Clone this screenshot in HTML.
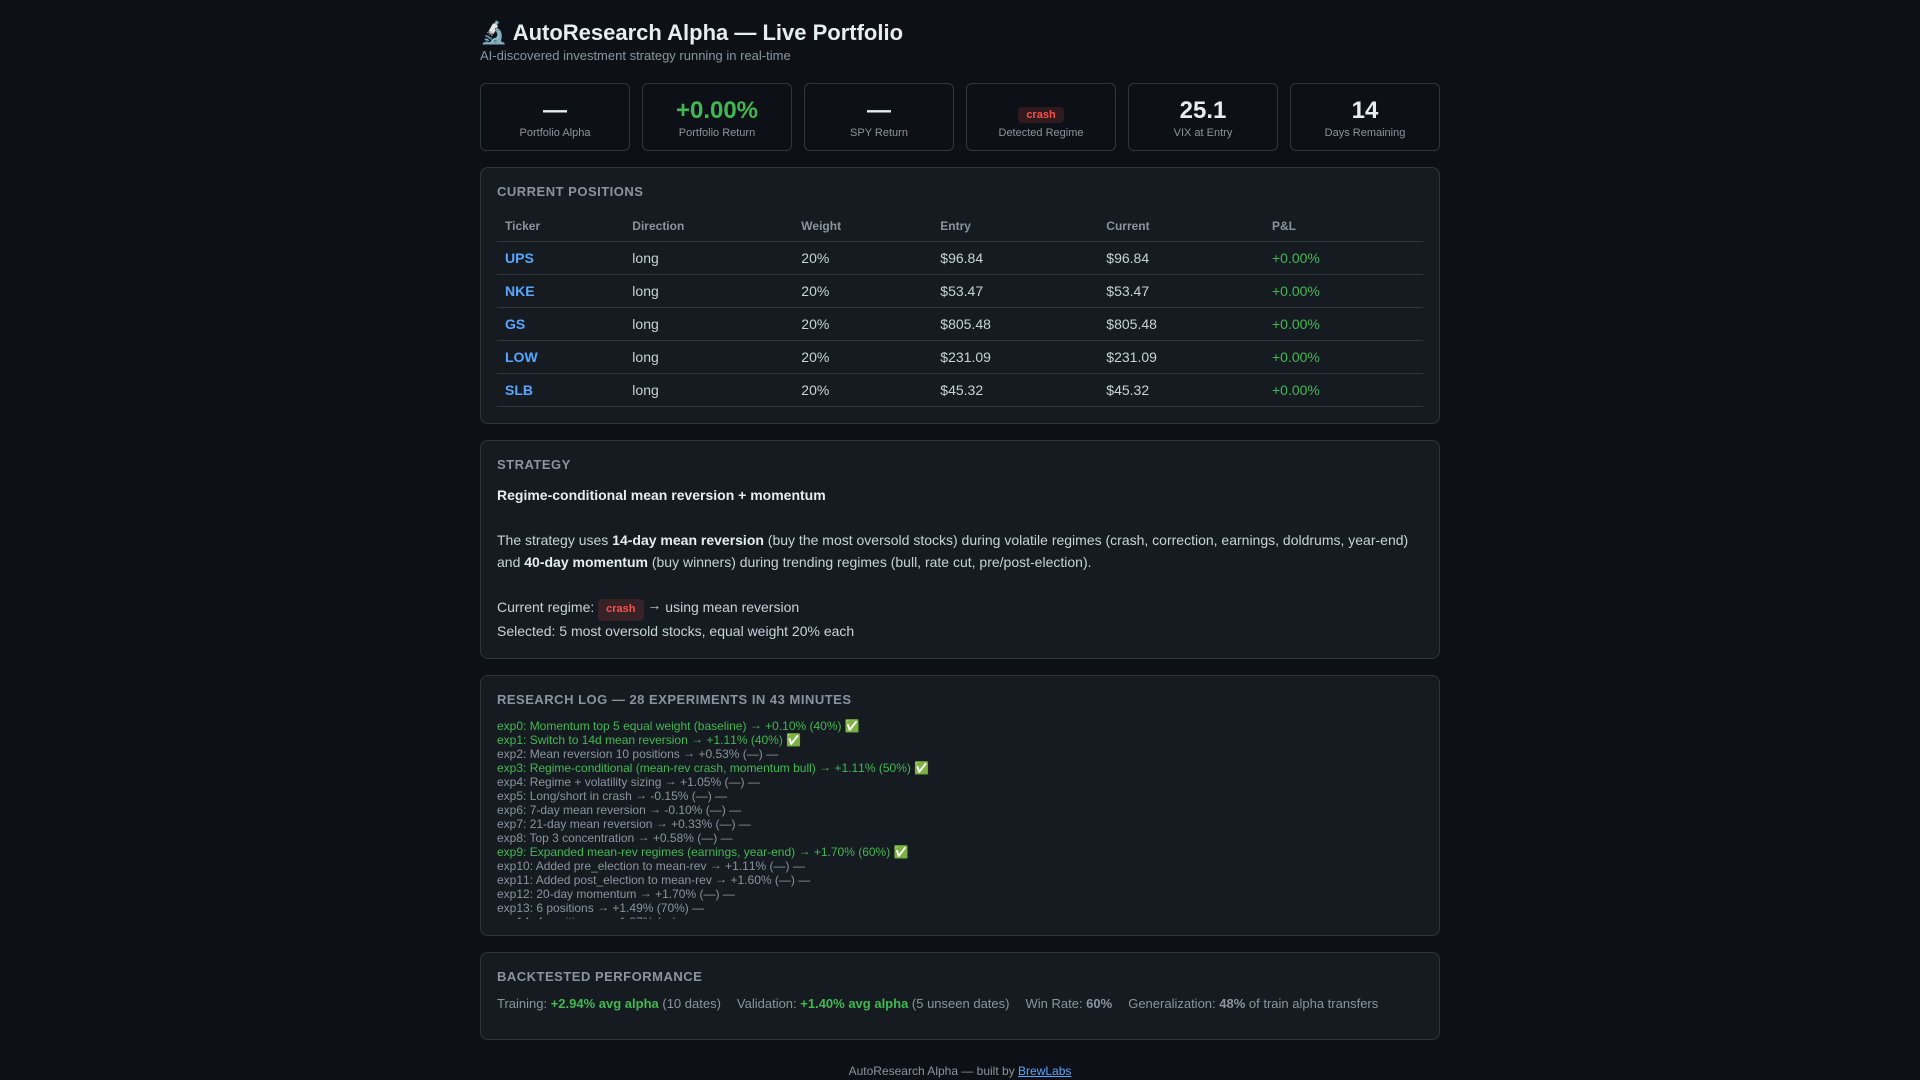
<!DOCTYPE html>
<html lang="en">
<head>
<meta charset="utf-8">
<title>AutoResearch Alpha — Live Portfolio</title>
<style>
*{box-sizing:border-box;margin:0;padding:0}
html,body{width:1920px;height:1080px;overflow:hidden}
body{background:#0d1117;color:#c9d1d9;font-family:Helvetica,Arial,"Liberation Sans",sans-serif;font-size:14px;position:relative}
.wrap{position:absolute;left:480px;top:0;width:960px}
h1{position:absolute;left:0;top:18px;font-size:22px;line-height:29px;font-weight:700;white-space:nowrap;color:#e6edf3}
.sub{position:absolute;left:0;top:47px;font-size:13px;line-height:17px;color:#8b949e}
.metrics{position:absolute;left:0;top:83px;width:960px;display:grid;grid-template-columns:repeat(6,150px);gap:12px}
.m{height:68px;border:1px solid #30363d;border-radius:6px;text-align:center;padding-top:12px}
.v{font-size:24px;line-height:29px;font-weight:700;height:29px;color:#e6edf3}
.v.g{color:#3fb950}
.l{font-size:11px;line-height:13px;color:#8b949e;margin-top:2px}
.g{color:#3fb950}
.badge{display:inline-block;background:rgba(248,81,73,.15);color:#f85149;font-weight:700;border-radius:4px}
.m .badge{font-size:11px;line-height:13px;padding:2px 8px 1px;vertical-align:top;margin-top:11px}
.p{position:absolute;left:0;width:960px;background:#161b22;border:1px solid #30363d;border-radius:8px}
h2{position:absolute;left:16px;font-size:13px;line-height:15px;font-weight:700;color:#8b949e;letter-spacing:.5px;text-transform:uppercase;white-space:nowrap}
table{position:absolute;left:16px;top:41px;width:926px;border-collapse:collapse;table-layout:fixed}
th{height:32px;text-align:left;padding:3px 8px 0;font-size:12px;font-weight:700;color:#8b949e;border-bottom:1px solid #30363d}
td{height:33px;padding:0 8px;font-size:14px;border-bottom:1px solid #30363d;color:#c9d1d9}
td.t{color:#58a6ff;font-weight:700}
td.g{color:#3fb950}
.s{position:absolute;left:16px;top:43px;width:926px;font-size:14px;line-height:22.4px}
.s strong{color:#e6edf3}
.s .badge{font-size:11px;line-height:13px;padding:4px 8px 5px;vertical-align:baseline}
.last{position:absolute;left:0;top:135.6px}
.s .a{position:relative;top:-2px}
.log{position:absolute;left:16px;top:43px;width:926px;height:200px;overflow:hidden;font-size:12px;line-height:14px;color:#8b949e}
.log .a{position:relative;top:-1px}
.n{font-kerning:none}
.perf{position:absolute;left:16px;top:41px;font-size:13px;line-height:20px;color:#8b949e;white-space:nowrap}
.perf span.i{margin-right:16px}
.foot{position:absolute;left:0;top:1064px;width:960px;text-align:center;font-size:12px;line-height:14px;color:#8b949e}
.foot a{color:#58a6ff;text-decoration:underline}
</style>
</head>
<body>
<div class="wrap">
<h1>🔬 AutoResearch Alpha — Live Portfolio</h1>
<div class="sub">AI-discovered investment strategy running in real-time</div>
<div class="metrics">
<div class="m"><div class="v">—</div><div class="l">Portfolio Alpha</div></div>
<div class="m"><div class="v g">+0.00%</div><div class="l">Portfolio Return</div></div>
<div class="m"><div class="v">—</div><div class="l">SPY Return</div></div>
<div class="m"><div class="v"><span class="badge">crash</span></div><div class="l">Detected Regime</div></div>
<div class="m"><div class="v">25.1</div><div class="l">VIX at Entry</div></div>
<div class="m"><div class="v">14</div><div class="l">Days Remaining</div></div>
</div>

<div class="p" style="top:167px;height:257px">
<h2 style="top:16px">Current Positions</h2>
<table>
<colgroup><col style="width:127.3px"><col style="width:169px"><col style="width:139px"><col style="width:166px"><col style="width:165.7px"><col style="width:159px"></colgroup>
<tr><th>Ticker</th><th>Direction</th><th>Weight</th><th>Entry</th><th>Current</th><th>P&amp;L</th></tr>
<tr><td class="t">UPS</td><td>long</td><td>20%</td><td>$96.84</td><td>$96.84</td><td class="g">+0.00%</td></tr>
<tr><td class="t">NKE</td><td>long</td><td>20%</td><td>$53.47</td><td>$53.47</td><td class="g">+0.00%</td></tr>
<tr><td class="t">GS</td><td>long</td><td>20%</td><td>$805.48</td><td>$805.48</td><td class="g">+0.00%</td></tr>
<tr><td class="t">LOW</td><td>long</td><td>20%</td><td>$231.09</td><td>$231.09</td><td class="g">+0.00%</td></tr>
<tr><td class="t">SLB</td><td>long</td><td>20%</td><td>$45.32</td><td>$45.32</td><td class="g">+0.00%</td></tr>
</table>
</div>

<div class="p" style="top:440px;height:219px">
<h2 style="top:16px">Strategy</h2>
<div class="s">
<strong>Regime-conditional mean reversion + momentum</strong><br><br>
The strategy uses <strong>14-day mean reversion</strong> (buy the most oversold stocks) during volatile regimes (crash, correction, earnings, doldrums, year-end) and <strong>40-day momentum</strong> (buy winners) during trending regimes (bull, rate cut, pre/post-election).<br><br>
Current regime: <span class="badge">crash</span> <span class="a">→</span> using mean reversion
<div class="last">Selected: 5 most oversold stocks, equal weight 20% each</div>
</div>
</div>

<div class="p" style="top:675px;height:261px">
<h2 style="top:16px">Research Log — 28 experiments in 43 minutes</h2>
<div class="log">
<div class="g">exp0: Momentum top 5 equal weight (baseline) <span class="a">→</span> +0.10% (40%) ✅</div>
<div class="g">exp1: Switch to 14d mean reversion <span class="a">→</span> +1.<span class="n">11</span>% (40%) ✅</div>
<div>exp2: Mean reversion 10 positions <span class="a">→</span> +0.53% (—) —</div>
<div class="g">exp3: Regime-conditional (mean-rev crash, momentum bull) <span class="a">→</span> +1.<span class="n">11</span>% (50%) ✅</div>
<div>exp4: Regime + volatility sizing <span class="a">→</span> +1.05% (—) —</div>
<div>exp5: Long/short in crash <span class="a">→</span> -0.15% (—) —</div>
<div>exp6: 7-day mean reversion <span class="a">→</span> -0.10% (—) —</div>
<div>exp7: 21-day mean reversion <span class="a">→</span> +0.33% (—) —</div>
<div>exp8: Top 3 concentration <span class="a">→</span> +0.58% (—) —</div>
<div class="g">exp9: Expanded mean-rev regimes (earnings, year-end) <span class="a">→</span> +1.70% (60%) ✅</div>
<div>exp10: Added pre_election to mean-rev <span class="a">→</span> +1.<span class="n">11</span>% (—) —</div>
<div>exp<span class="n">11</span>: Added post_election to mean-rev <span class="a">→</span> +1.60% (—) —</div>
<div>exp12: 20-day momentum <span class="a">→</span> +1.70% (—) —</div>
<div>exp13: 6 positions <span class="a">→</span> +1.49% (70%) —</div>
<div>exp14: 4 positions <span class="a">→</span> +1.87% (—) —</div>
</div>
</div>

<div class="p" style="top:952px;height:88px">
<h2 style="top:16px">Backtested Performance</h2>
<div class="perf"><span class="i">Training: <strong class="g">+2.94% avg alpha</strong> (10 dates)</span><span class="i">Validation: <strong class="g">+1.40% avg alpha</strong> (5 unseen dates)</span><span class="i">Win Rate: <strong>60%</strong></span><span>Generalization: <strong>48%</strong> of train alpha transfers</span></div>
</div>

<div class="foot">AutoResearch Alpha — built by <a>BrewLabs</a></div>
</div>
</body>
</html>
